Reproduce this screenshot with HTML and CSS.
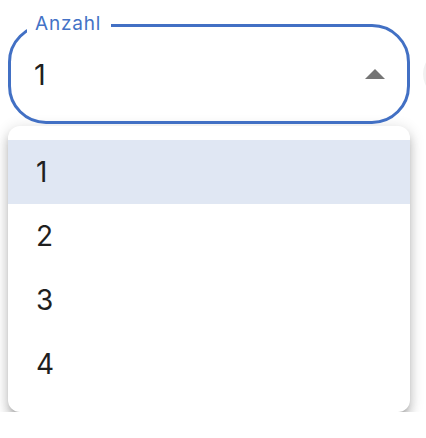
FILE: index.html
```html
<!DOCTYPE html>
<html lang="de">
<head>
<meta charset="utf-8">
<title>Anzahl</title>
<link rel="stylesheet" href="styles.css">
</head>
<body>
<div class="page">
  <div class="row">
    <div class="field">
      <span class="field-label">Anzahl</span>
      <span class="field-value">1</span>
      <svg class="field-arrow" width="20" height="10" viewBox="0 0 20 10" aria-hidden="true">
        <path d="M0 10 L10 0 L20 10 Z" fill="#757575"/>
      </svg>
    </div>
    <div class="side-button"></div>
  </div>
  <ul class="menu">
    <li class="menu-item selected">1</li>
    <li class="menu-item">2</li>
    <li class="menu-item">3</li>
    <li class="menu-item">4</li>
  </ul>
</div>
</body>
</html>
```

FILE: styles.css
```css
html, body {
  margin: 0;
  background: #ffffff;
  overflow: hidden;
}

body {
  font-family: Inter, "Noto Sans", sans-serif;
  color: #1f1f1f;
}

.page {
  padding: 24px 0 0 8px;
}

/* the row is clipped at the window edge; the next control only peeks in */
.row {
  display: flex;
  gap: 13px;
  align-items: center;
  width: 418px;
  overflow: hidden;
  padding-top: 14px;
  margin-top: -14px;
}

.field {
  position: relative;
  flex: 0 0 402px;
  box-sizing: border-box;
  height: 100px;
  border: 3px solid #4270c4;
  border-radius: 38px;
  display: flex;
  align-items: center;
  justify-content: space-between;
  padding: 0 22px 0 23px;
}

/* floating label sits on the top border and cuts a notch into it */
.field-label {
  position: absolute;
  top: -14px;
  left: 16px;
  padding: 0 10px 0 8px;
  background: #ffffff;
  color: #4472c6;
  font-size: 19px;
  line-height: 22px;
  letter-spacing: 0.8px;
}

.field-value {
  font-size: 29px;
  line-height: 1;
}

.field-arrow {
  display: block;
}

.side-button {
  flex: 0 0 48px;
  height: 48px;
  border-radius: 50%;
  background: #f1f1f1;
}

.menu {
  list-style: none;
  margin: 2px 0 0 0;
  padding: 14px 0 16px;
  width: 402px;
  box-sizing: border-box;
  background: #ffffff;
  border-radius: 12px;
  box-shadow:
    0 5px 5px -3px rgba(0, 0, 0, 0.2),
    0 8px 10px 1px rgba(0, 0, 0, 0.14),
    0 3px 14px 2px rgba(0, 0, 0, 0.12);
}

.menu-item {
  height: 64px;
  display: flex;
  align-items: center;
  padding-left: 28px;
  font-size: 28px;
}

.menu-item.selected {
  background: #e0e7f3;
}
```
